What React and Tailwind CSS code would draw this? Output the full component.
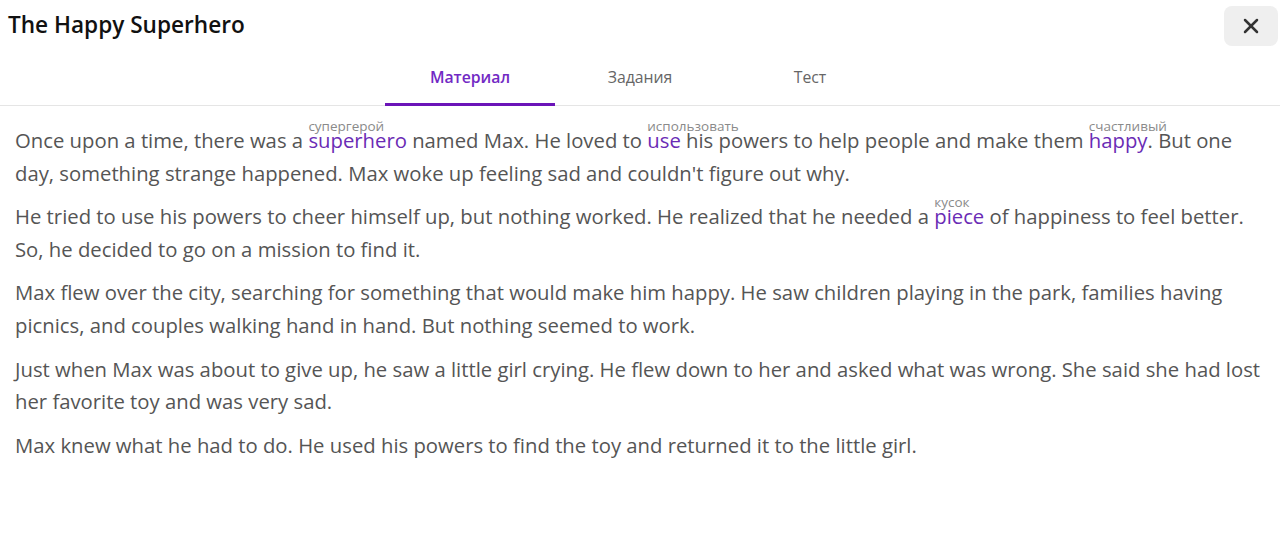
import React, { useState } from "react";
import { X } from "lucide-react";

const Word = ({ children, tr }) => (
  <span className="relative inline-block text-[#6a2bb5]">
    <span className="absolute left-0 -top-[4px] whitespace-nowrap text-[13.5px] leading-none text-[#8a8a8a]">
      {tr}
    </span>
    {children}
  </span>
);

const tabs = ["Материал", "Задания", "Тест"];

export default function App() {
  const [active, setActive] = useState(0);

  return (
    <div className="min-h-[540px] w-full bg-white font-['Open_Sans',sans-serif]">
      {/* Header */}
      <div className="flex items-start justify-between pl-2 pr-[2px] pt-[6px]">
        <h1 className="pt-[4px] text-[22.6px] font-semibold leading-[30px] text-[#111]">
          The Happy Superhero
        </h1>
        <button className="flex h-10 w-[54px] items-center justify-center rounded-lg bg-[#efefef]">
          <X className="h-6 w-6 text-[#333]" strokeWidth={2.5} />
        </button>
      </div>

      {/* Tabs */}
      <div className="mt-[4px] flex justify-center border-b border-[#e5e5e5]">
        {tabs.map((t, i) => (
          <button
            key={t}
            onClick={() => setActive(i)}
            className={`-mb-px w-[170px] pb-[15px] pt-[17px] text-[15.8px] leading-[21px] border-b-[3px] ${
              active === i
                ? "border-[#6b14b8] font-semibold text-[#7229c4]"
                : "border-transparent text-[#666]"
            }`}
          >
            {t}
          </button>
        ))}
      </div>

      {/* Content */}
      <div className="pl-[15px] pr-[8px] pt-[18px] text-[20.3px] leading-[32.6px] text-[#555]">
        <p className="mb-[11px]">
          Once upon a time, there was a <Word tr="супергерой">superhero</Word> named Max. He loved to{" "}
          <Word tr="использовать">use</Word> his powers to help people and make them{" "}
          <Word tr="счастливый">happy</Word>. But one day, something strange happened. Max woke up
          feeling sad and couldn't figure out why.
        </p>
        <p className="mb-[11px]">
          He tried to use his powers to cheer himself up, but nothing worked. He realized that he
          needed a <Word tr="кусок">piece</Word> of happiness to feel better. So, he decided to go on
          a mission to find it.
        </p>
        <p className="mb-[11px]">
          Max flew over the city, searching for something that would make him happy. He saw children
          playing in the park, families having picnics, and couples walking hand in hand. But nothing
          seemed to work.
        </p>
        <p className="mb-[11px]">
          Just when Max was about to give up, he saw a little girl crying. He flew down to her and
          asked what was wrong. She said she had lost her favorite toy and was very sad.
        </p>
        <p className="mb-[11px]">
          Max knew what he had to do. He used his powers to find the toy and returned it to the little
          girl.
        </p>
      </div>
    </div>
  );
}
